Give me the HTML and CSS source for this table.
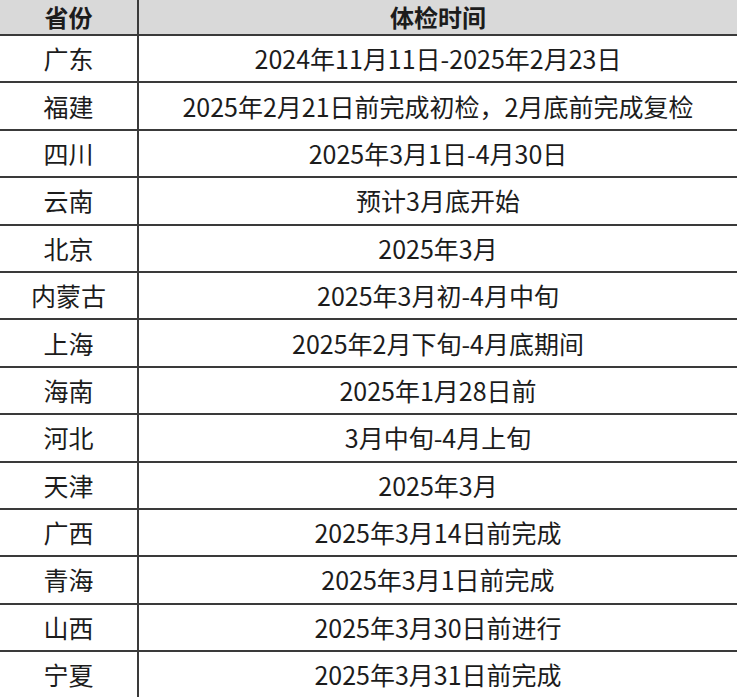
FILE: index.html
```html
<!DOCTYPE html>
<html lang="zh">
<head>
<meta charset="utf-8">
<link rel="stylesheet" href="styles.css">
</head>
<body>
<div class="table">
  <div class="row head"><div class="c1">省份</div><div class="c2">体检时间</div></div>
  <div class="row"><div class="c1">广东</div><div class="c2">2024年11月11日-2025年2月23日</div></div>
  <div class="row"><div class="c1">福建</div><div class="c2">2025年2月21日前完成初检，2月底前完成复检</div></div>
  <div class="row"><div class="c1">四川</div><div class="c2">2025年3月1日-4月30日</div></div>
  <div class="row"><div class="c1">云南</div><div class="c2">预计3月底开始</div></div>
  <div class="row"><div class="c1">北京</div><div class="c2">2025年3月</div></div>
  <div class="row"><div class="c1">内蒙古</div><div class="c2">2025年3月初-4月中旬</div></div>
  <div class="row"><div class="c1">上海</div><div class="c2">2025年2月下旬-4月底期间</div></div>
  <div class="row"><div class="c1">海南</div><div class="c2">2025年1月28日前</div></div>
  <div class="row"><div class="c1">河北</div><div class="c2">3月中旬-4月上旬</div></div>
  <div class="row"><div class="c1">天津</div><div class="c2">2025年3月</div></div>
  <div class="row"><div class="c1">广西</div><div class="c2">2025年3月14日前完成</div></div>
  <div class="row"><div class="c1">青海</div><div class="c2">2025年3月1日前完成</div></div>
  <div class="row"><div class="c1">山西</div><div class="c2">2025年3月30日前进行</div></div>
  <div class="row"><div class="c1">宁夏</div><div class="c2">2025年3月31日前完成</div></div>
</div>
</body>
</html>
```

FILE: styles.css
```css
html, body {
  margin: 0;
  padding: 0;
  background: #ffffff;
}
body {
  width: 737px;
  height: 698px;
  overflow: hidden;
  font-family: "Noto Sans CJK SC", "Noto Sans", sans-serif;
  font-size: 25px;
  color: #1c1c1c;
}
.table {
  display: flex;
  flex-direction: column;
}
.row {
  display: flex;
  height: 45.4px;
  border-top: 2px solid #3a3a3a;
}
.row.head {
  height: 34px;
  border-top: none;
  background: #d9d9d9;
  font-weight: bold;
  font-size: 24px;
}
.c1, .c2 {
  display: flex;
  align-items: center;
  justify-content: center;
  white-space: nowrap;
  line-height: 1;
}
.c1 {
  width: 137px;
  flex: none;
  border-right: 2px solid #3a3a3a;
}
.c2 {
  flex: 1;
}
```
